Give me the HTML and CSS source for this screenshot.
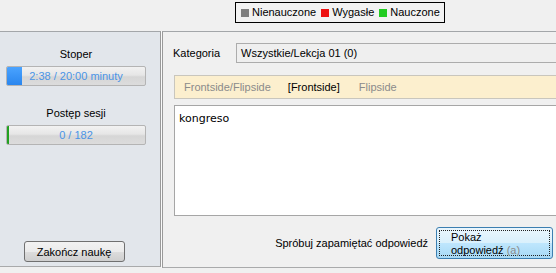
FILE: index.html
```html
<!DOCTYPE html>
<html lang="pl">
<head>
<meta charset="utf-8">
<title>Nauka</title>
<link rel="stylesheet" href="styles.css">
</head>
<body>
<div class="window">
  <div class="topbar">
    <div class="legend">
      <span class="legend-item"><span class="sq sq-gray"></span>Nienauczone</span>
      <span class="legend-item"><span class="sq sq-red"></span>Wygasłe</span>
      <span class="legend-item"><span class="sq sq-green"></span>Nauczone</span>
    </div>
  </div>
  <div class="main">
    <div class="side">
      <div class="side-label first">Stoper</div>
      <div class="bar">
        <div class="bar-fill blue" style="width:15px"></div>
        <span class="bar-text">2:38 / 20:00 minuty</span>
      </div>
      <div class="side-label second">Postęp sesji</div>
      <div class="bar">
        <div class="bar-fill green" style="width:2px"></div>
        <span class="bar-text">0 / 182</span>
      </div>
      <div class="side-bottom">
        <button class="btn">Zakończ naukę</button>
      </div>
    </div>
    <div class="sep"></div>
    <div class="content">
      <div class="cat-row">
        <span class="cat-label">Kategoria</span>
        <div class="combo">Wszystkie/Lekcja 01 (0)</div>
      </div>
      <div class="sides-bar">
        <span class="mode muted">Frontside/Flipside</span>
        <span class="mode active">[Frontside]</span>
        <span class="mode muted">Flipside</span>
      </div>
      <div class="card">kongreso</div>
      <div class="answer-row">
        <span class="hint">Spróbuj zapamiętać odpowiedź</span>
        <button class="btn-show"><span class="focus">Pokaż<br>odpowiedź <span class="key">(a)</span></span></button>
      </div>
    </div>
  </div>
</div>
</body>
</html>
```

FILE: styles.css
```css
* { box-sizing: border-box; }
html, body {
  margin: 0;
  padding: 0;
  width: 556px;
  height: 273px;
  overflow: hidden;
  background: #f0f0f0;
  font-family: "Liberation Sans", Arial, sans-serif;
  font-size: 11px;
  color: #000;
}
.window {
  width: 580px;
  height: 273px;
  display: flex;
  flex-direction: column;
}
.topbar {
  height: 31px;
  padding: 2px 0 0 235px;
}
.legend {
  display: inline-flex;
  align-items: center;
  height: 21px;
  border: 1px solid #000;
  padding: 0 4px 0 5px;
  gap: 5px;
  background: #f2f2f2;
}
.legend-item {
  display: inline-flex;
  align-items: center;
  gap: 3px;
  line-height: 13px;
}
.sq { display: inline-block; width: 8px; height: 8px; }
.sq-gray { background: #7f7f7f; }
.sq-red { background: #ee1111; }
.sq-green { background: #22cc22; }

.main {
  display: flex;
  height: 237px;
}
.side {
  width: 161px;
  height: 236px;
  background: #e2e6eb;
  border-top: 1px solid #a3a6a9;
  border-right: 1px solid #9a9a9a;
  border-bottom: 1px solid #a9aaab;
  display: flex;
  flex-direction: column;
  padding: 0 0 4px 6px;
}
.side-label {
  width: 140px;
  text-align: center;
  line-height: 13px;
}
.side-label.first { margin-top: 16px; }
.side-label.second { margin-top: 21px; }
.bar {
  position: relative;
  width: 140px;
  height: 20px;
  margin-top: 5px;
  border: 1px solid #b4b4b4;
  border-radius: 2px;
  background: linear-gradient(#f2f2f2 0%, #e6e6e6 45%, #d6d6d6 55%, #dcdcdc 100%);
  display: flex;
  align-items: center;
  justify-content: center;
  overflow: hidden;
}
.bar-fill {
  position: absolute;
  left: 0;
  top: 0;
  bottom: 0;
}
.bar-fill.blue { background: linear-gradient(#4aa3ff, #2a86ee); }
.bar-fill.green { background: #21a121; }
.bar-text {
  position: relative;
  color: #4a94e6;
  line-height: 13px;
}
.side-bottom {
  margin-top: auto;
  width: 140px;
  display: flex;
  justify-content: center;
  padding-right: 4px;
}
.btn {
  width: 101px;
  height: 21px;
  border: 1px solid #707070;
  border-radius: 3px;
  background: linear-gradient(#f2f2f2 0%, #ebebeb 50%, #dddddd 51%, #cfcfcf 100%);
  font-family: "Liberation Sans", Arial, sans-serif;
  font-size: 11px;
  color: #000;
  padding: 0;
}
.sep {
  width: 1px;
  height: 237px;
  background: #fafafa;
}
.content {
  width: 404px;
  height: 237px;
  border-top: 1px solid #a3a6a9;
  border-left: 1px solid #9a9a9a;
  border-bottom: 1px solid #a9aaab;
  background: #f0f0f0;
  padding: 11px 0 0 10px;
  display: flex;
  flex-direction: column;
}
.cat-row {
  display: flex;
  align-items: center;
  height: 20px;
}
.cat-label {
  width: 63px;
  line-height: 13px;
}
.combo {
  flex: 1;
  height: 20px;
  border: 1px solid #acacac;
  background: #efefef;
  padding: 0 0 0 4px;
  line-height: 18px;
}
.sides-bar {
  margin: 12px 0 0 1px;
  height: 24px;
  border: 1px solid #c9c6bd;
  background: #fcefce;
  display: flex;
  align-items: center;
  padding-left: 9px;
}
.mode { line-height: 13px; }
.mode.muted { color: #8b8b8b; }
.mode + .mode { margin-left: 17px; }
.mode.active + .mode { margin-left: 19px; }
.card {
  margin: 6px 0 0 1px;
  height: 111px;
  border: 1px solid #a6a6a6;
  background: #fff;
  padding: 6px 4px;
  font-family: "DejaVu Sans", sans-serif;
  font-size: 11px;
  line-height: 13px;
}
.answer-row {
  display: flex;
  align-items: center;
  justify-content: flex-end;
  margin-top: 11px;
  padding-right: 13px;
  gap: 8px;
}
.hint { line-height: 13px; margin-top: 1px; }
.btn-show {
  width: 117px;
  height: 32px;
  border: 1px solid #3c7fb1;
  border-radius: 3px;
  background: linear-gradient(#eaf6fd 0%, #d9f0fc 50%, #bee6fd 51%, #a7d9f5 100%);
  padding: 2px;
  font-family: "Liberation Sans", Arial, sans-serif;
  font-size: 11px;
  color: #000;
  text-align: left;
}
.focus {
  display: block;
  height: 26px;
  border: 1px dotted #222;
  padding: 0 0 0 11px;
  line-height: 13px;
}
.key { color: #8c8c8c; }
```
